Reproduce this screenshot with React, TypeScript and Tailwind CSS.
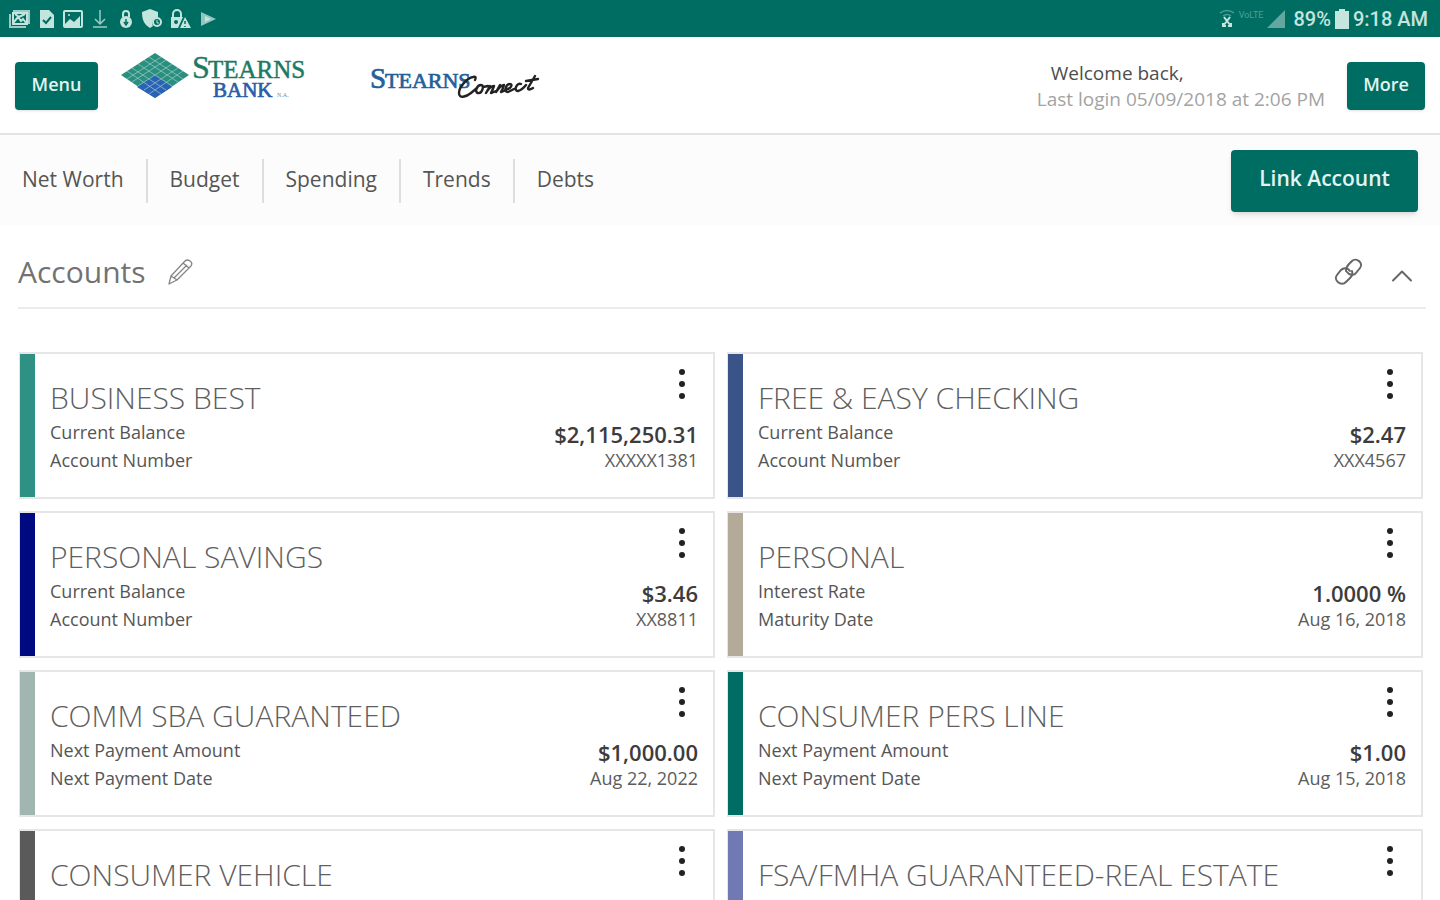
import { ChevronUp } from 'lucide-react'

interface AccountRow {
  label: string
  value: string
}

interface Account {
  name: string
  bar: string
  rows: AccountRow[]
}

const navItems = ['Net Worth', 'Budget', 'Spending', 'Trends', 'Debts']

const accounts: Account[] = [
  {
    name: 'BUSINESS BEST',
    bar: 'bg-[#2f9184]',
    rows: [
      { label: 'Current Balance', value: '$2,115,250.31' },
      { label: 'Account Number', value: 'XXXXX1381' },
    ],
  },
  {
    name: 'FREE & EASY CHECKING',
    bar: 'bg-[#3b5488]',
    rows: [
      { label: 'Current Balance', value: '$2.47' },
      { label: 'Account Number', value: 'XXX4567' },
    ],
  },
  {
    name: 'PERSONAL SAVINGS',
    bar: 'bg-[#000a80]',
    rows: [
      { label: 'Current Balance', value: '$3.46' },
      { label: 'Account Number', value: 'XX8811' },
    ],
  },
  {
    name: 'PERSONAL',
    bar: 'bg-[#b3aa99]',
    rows: [
      { label: 'Interest Rate', value: '1.0000 %' },
      { label: 'Maturity Date', value: 'Aug 16, 2018' },
    ],
  },
  {
    name: 'COMM SBA GUARANTEED',
    bar: 'bg-[#a2b6b1]',
    rows: [
      { label: 'Next Payment Amount', value: '$1,000.00' },
      { label: 'Next Payment Date', value: 'Aug 22, 2022' },
    ],
  },
  {
    name: 'CONSUMER PERS LINE',
    bar: 'bg-[#006d63]',
    rows: [
      { label: 'Next Payment Amount', value: '$1.00' },
      { label: 'Next Payment Date', value: 'Aug 15, 2018' },
    ],
  },
  { name: 'CONSUMER VEHICLE', bar: 'bg-[#5a5a5a]', rows: [] },
  { name: 'FSA/FMHA GUARANTEED-REAL ESTATE', bar: 'bg-[#7079b2]', rows: [] },
]

function StatusBar() {
  return (
    <div className="flex h-[37px] shrink-0 items-center justify-between bg-[#006d63] pr-3 pl-2 text-[#c4e4de]">
      <div className="flex items-center gap-2">
        {/* gallery */}
        <svg width="23" height="20" viewBox="0 0 23 20" fill="none" stroke="currentColor" strokeWidth="2">
          <path d="M5 2h16v13M2 5v13h16" opacity="0.8" />
          <rect x="5" y="4" width="14" height="11" />
          <path d="M5 14l5-6 3 4 2-2 4 5M7 5l4 3 6-3" />
        </svg>
        <svg width="16" height="20" viewBox="0 0 16 20">
          <path d="M1 1h9l5 5v13H1z" fill="currentColor" />
          <path d="M4 11l3 3 5-6" fill="none" stroke="#006d63" strokeWidth="2" />
        </svg>
        <svg width="20" height="18" viewBox="0 0 20 18">
          <rect x="1" y="1" width="18" height="16" rx="1" fill="none" stroke="currentColor" strokeWidth="2" />
          <path d="M2 14l5-5 4 3 6-6v10H2z" fill="currentColor" />
          <circle cx="6" cy="5" r="1" fill="currentColor" />
        </svg>
        <svg className="mx-0.5" width="14" height="20" viewBox="0 0 14 20" fill="none" stroke="currentColor" strokeWidth="1.5" opacity="0.8">
          <path d="M7 1v13M2 10l5 5 5-5M0 18h14" />
        </svg>
        <svg className="ml-0.5" width="14" height="20" viewBox="0 0 14 20">
          <path d="M4 8V5a3 3 0 016 0v3" fill="none" stroke="currentColor" strokeWidth="2" />
          <circle cx="7" cy="13" r="6" fill="currentColor" />
          <path d="M7 10v4M5 13l2 3 2-3" fill="none" stroke="#006d63" strokeWidth="1.5" />
        </svg>
        <svg width="21" height="20" viewBox="0 0 21 20">
          <path d="M9 0l8 3v5a6 6 0 00-5 9l-3 2C4 16 1 12 1 3z" fill="currentColor" />
          <circle cx="16" cy="13" r="4" fill="none" stroke="currentColor" strokeWidth="2" />
          <path d="M16 11v3h2" fill="none" stroke="currentColor" />
        </svg>
        <svg width="22" height="20" viewBox="0 0 22 20">
          <path d="M3 8V5a4 4 0 018 0v3" fill="none" stroke="currentColor" strokeWidth="2" />
          <path d="M1 8h12l-5 11H1z" fill="currentColor" />
          <circle cx="6" cy="13" r="2" fill="#006d63" />
          <path d="M15 8l6 11H10z" fill="currentColor" />
          <path d="M15 12v3M15 17v1" stroke="#006d63" strokeWidth="1.5" />
        </svg>
        <svg width="17" height="16" viewBox="0 0 17 16">
          <path d="M1 1l15 7-15 7z" fill="currentColor" opacity="0.75" />
          <path d="M5 5l6 3-6 3z" fill="currentColor" />
        </svg>
      </div>
      <div className="flex items-center gap-1 font-[Roboto,sans-serif] text-xl">
        <svg width="16" height="19" viewBox="0 0 16 19" fill="none" stroke="currentColor">
          <path d="M1 4q7-5 14 0M4 7q4-3 8 0" strokeWidth="1.5" opacity="0.4" />
          <path d="M5 8l3 4 3-4M8 12l-4 5M8 12l4 5M4 14v3h3M12 14v3H9" strokeWidth="2" />
        </svg>
        <span className="self-start text-[9px] leading-5 opacity-40">VoLTE</span>
        <svg width="18" height="18" viewBox="0 0 18 18" opacity="0.5">
          <path d="M18 0v18H0z" fill="currentColor" />
        </svg>
        <span className="ml-1 font-medium">89%</span>
        <svg width="14" height="20" viewBox="0 0 14 20" fill="currentColor">
          <path d="M4 0h6v2h4v18H0V2h4z" />
        </svg>
        <span className="font-medium">9:18 AM</span>
      </div>
    </div>
  )
}

function BankLogo() {
  return (
    <a href="#" aria-label="Stearns Bank" className="ml-[22px]">
      <svg width="188" height="56" viewBox="0 0 188 56">
        <path d="M35 5L69 27 35 50 1 27z" fill="#2a8f7f" />
        <path d="M35 27L52 39 35 50 17 39z" fill="#2a62b4" />
        <g fill="none" stroke="#bfe0dc" strokeWidth="0.8" opacity="0.7">
          <path d="M29 9L63 31M24 12L58 34M18 16L52 38M12 20L46 42M7 23L41 46" />
          <path d="M41 9L7 31M46 12L12 34M52 16L18 38M58 20L24 42M63 23L29 46" />
        </g>
        <g fontFamily="'Liberation Serif', serif">
          <text x="72" y="30" fontSize="32" fill="#1d7a66" stroke="#1d7a66" strokeWidth="0.4">S</text>
          <text x="88" y="30" fontSize="25" fill="#1d7a66" stroke="#1d7a66" strokeWidth="0.5">TEARNS</text>
          <text x="93" y="49" fontSize="21" fill="#2a5da8" stroke="#2a5da8" strokeWidth="0.7">BANK</text>
          <text x="157" y="49" fontSize="6" fill="#6f8ca8">N.A.</text>
        </g>
      </svg>
    </a>
  )
}

function ConnectLogo() {
  return (
    <a href="#" aria-label="Stearns Connect" className="ml-[61px] pt-3">
      <svg width="172" height="44" viewBox="0 0 172 44">
        <g fontFamily="'Liberation Serif', serif" fill="#24609a" stroke="#24609a" strokeWidth="0.7">
          <text x="1" y="28" fontSize="29">S</text>
          <text x="16" y="28" fontSize="22">TEARNS</text>
        </g>
        <g fill="none" stroke="#222" strokeWidth="2.4" strokeLinecap="round" strokeLinejoin="round">
          <path d="M106 20q2-4-2-3c-6 1-14 10-14 16 0 6 7 4 12 0l6-5" />
          <path d="M112 25c-4 0-7 7-3 8s7-8 3-8M114 27l5-1M121 26l-4 7q4-7 8-7-1 3-3 7 3-1 5-2M131 25l-4 7q5-7 8-7-1 4-3 7 3-1 5-2" />
          <path d="M138 29c4 0 6-5 3-5-4 0-7 8-2 8l6-3M152 24c-4-2-8 7-3 7q4-1 8-6M166 16l-7 12q0 3 5 0M157 21l12-2" />
        </g>
      </svg>
    </a>
  )
}

function AccountCard({ account }: { account: Account }) {
  return (
    <article className="flex h-[147px] border-2 border-l border-[#e6e6e6] bg-white">
      <div className={`w-[15px] shrink-0 ${account.bar}`} />
      <div className="relative min-w-0 flex-1 pt-6 pr-[15px] pl-[15px]">
        <h3 className="truncate pr-12 text-[30px] leading-10 font-light text-[#5f5f5f]">{account.name}</h3>
        <dl>
          {account.rows.map((row, i) => (
            <div key={row.label} className="flex h-7 items-center justify-between">
              <dt className="text-lg leading-7 text-[#555]">{row.label}</dt>
              <dd className={i === 0 ? 'pt-1 text-[22px] leading-7 font-semibold text-[#3c3c3c]' : 'text-lg leading-7 text-[#5c5c5c]'}>
                {row.value}
              </dd>
            </div>
          ))}
        </dl>
        <button type="button" aria-label={`${account.name} options`} className="absolute top-3 right-[27px]">
          <svg width="8" height="36" viewBox="0 0 8 36" fill="#222">
            <circle cx="4" cy="6" r="3" />
            <circle cx="4" cy="18" r="3" />
            <circle cx="4" cy="30" r="3" />
          </svg>
        </button>
      </div>
    </article>
  )
}

export default function App() {
  return (
    <div className="flex h-screen flex-col overflow-hidden bg-white font-['Open_Sans',sans-serif] text-[#555]">
      <StatusBar />

      <header className="flex h-[98px] shrink-0 items-center border-b-2 border-[#e3e3e3] px-[15px] pt-0.5">
        <button type="button" className="h-12 w-[83px] rounded-sm bg-[#006d63] pb-1 text-lg font-semibold text-[#e2f4f1] shadow">
          Menu
        </button>
        <div className="mb-5 flex items-start">
          <BankLogo />
          <ConnectLogo />
        </div>
        <div className="mr-[22px] ml-auto">
          <p className="pl-[14px] text-[19px] leading-[26px] text-[#4d4d4d]">Welcome back,</p>
          <p className="text-[19px] leading-[26px] text-[#a3a3a3]">Last login 05/09/2018 at 2:06 PM</p>
        </div>
        <button type="button" className="h-12 w-[78px] rounded-sm bg-[#006d63] pb-1 text-lg font-semibold text-[#e2f4f1] shadow">
          More
        </button>
      </header>

      <main className="flex-1 overflow-y-auto [scrollbar-width:none]">
        <div className="flex h-[90px] items-center justify-between bg-[#fcfcfc] pt-0.5 pr-[22px]">
          <nav className="flex divide-x-2 divide-[#dedede]">
            {navItems.map(item => (
              <a key={item} href="#" className="px-[22px] pb-1 text-[21px] leading-10 text-[#555]">
                {item}
              </a>
            ))}
          </nav>
          <button type="button" className="h-[62px] w-[187px] rounded-sm bg-[#006d63] pb-1 text-[21px] font-semibold text-[#e2f4f1] shadow-md">
            Link Account
          </button>
        </div>

        <section>
          <div className="mr-[14px] ml-[18px] flex h-[84px] items-center border-b-2 border-[#ebebeb] pt-3">
            <h2 className="text-[30px] leading-9 text-[#727272]">Accounts</h2>
            <button type="button" aria-label="Edit accounts" className="ml-[22px]">
              <svg width="25" height="26" viewBox="0 0 25 26" fill="none" stroke="#858585" strokeWidth="1.3" strokeLinejoin="round">
                <path d="M1 25l2-8L17 2q2-2 5 0t1 5L9 21zM3 17l6 4M15 4l6 5M6 19L19 6" />
              </svg>
            </button>
            <button type="button" aria-label="Link an account" className="ml-auto">
              <svg width="30" height="30" viewBox="0 0 30 30" fill="none" stroke="#666" strokeWidth="2" strokeLinecap="round">
                <path d="M12 14c0-3 1-5 3-7l3-3c4-4 12 2 8 7l-4 5c-2 3-7 2-9-1" />
                <path d="M18 14c1 3 0 5-2 7l-4 4c-5 5-13-2-9-7l4-5c3-3 7-2 9 1" />
              </svg>
            </button>
            <button type="button" aria-label="Collapse accounts" className="mr-1.5 ml-5 pt-2">
              <ChevronUp className="size-9 text-[#666]" strokeWidth={1.3} />
            </button>
          </div>

          <div className="grid grid-cols-2 gap-3 pt-[43px] pr-[17px] pb-6 pl-[19px]">
            {accounts.map(account => (
              <AccountCard key={account.name} account={account} />
            ))}
          </div>
        </section>
      </main>
    </div>
  )
}
